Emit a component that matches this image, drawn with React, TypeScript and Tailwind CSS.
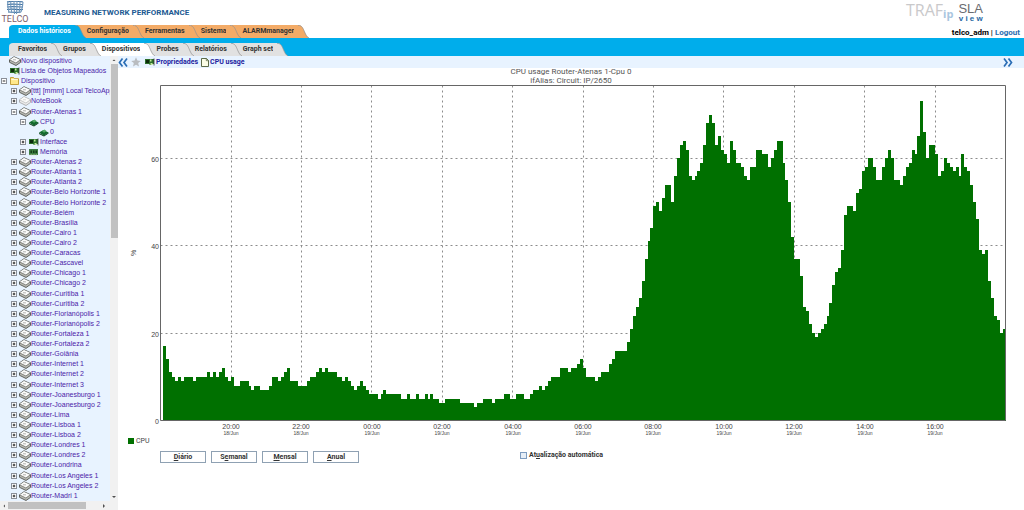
import type { ReactNode } from "react";

type IconName = "router" | "notebook" | "card" | "folder" | "chip" | "memory";

type TreeNode = {
  label: string;
  icon: IconName;
  level: number;
  toggle?: "+" | "-";
};

const routers = [
  "Atenas 2", "Atlanta 1", "Atlanta 2", "Belo Horizonte 1", "Belo Horizonte 2", "Belém", "Brasília",
  "Cairo 1", "Cairo 2", "Caracas", "Cascavel", "Chicago 1", "Chicago 2", "Curitiba 1", "Curitiba 2",
  "Florianópolis 1", "Florianópolis 2", "Fortaleza 1", "Fortaleza 2", "Goiânia", "Internet 1",
  "Internet 2", "Internet 3", "Joanesburgo 1", "Joanesburgo 2", "Lima", "Lisboa 1", "Lisboa 2",
  "Londres 1", "Londres 2", "Londrina", "Los Angeles 1", "Los Angeles 2", "Madri 1",
];

const tree: TreeNode[] = [
  { label: "Novo dispositivo", icon: "router", level: 0 },
  { label: "Lista de Objetos Mapeados", icon: "card", level: 0 },
  { label: "Dispositivo", icon: "folder", level: 0, toggle: "-" },
  { label: "[ttt] [mmm] Local TelcoApp", icon: "router", level: 1, toggle: "+" },
  { label: "NoteBook", icon: "notebook", level: 1, toggle: "+" },
  { label: "Router-Atenas 1", icon: "router", level: 1, toggle: "-" },
  { label: "CPU", icon: "chip", level: 2, toggle: "-" },
  { label: "0", icon: "chip", level: 3 },
  { label: "Interface", icon: "card", level: 2, toggle: "+" },
  { label: "Memória", icon: "memory", level: 2, toggle: "+" },
  ...routers.map((name): TreeNode => ({ label: `Router-${name}`, icon: "router", level: 1, toggle: "+" })),
];

const indent = ["pl-0", "pl-[10px]", "pl-[19px]", "pl-[29px]"];

// One sample every 5 minutes, in percent
const samples = [
  17, 14, 11, 10, 9, 10, 9, 10, 10, 10, 9, 10, 10, 10, 10, 11, 10, 11, 10, 11, 12, 10, 9, 10,
  8, 8, 9, 9, 9, 8, 7, 8, 8, 7, 7, 7, 8, 10, 10, 9, 10, 11, 12, 9, 9, 9, 8, 8,
  8, 9, 10, 10, 11, 12, 11, 12, 11, 11, 11, 10, 10, 9, 10, 9, 8, 7, 8, 9, 8, 7, 6, 6,
  6, 5, 6, 7, 6, 6, 6, 6, 6, 5, 5, 6, 5, 5, 6, 5, 5, 6, 5, 6, 5, 5, 4, 4,
  5, 5, 5, 5, 5, 4, 4, 4, 4, 4, 3, 4, 4, 5, 5, 5, 4, 5, 5, 5, 6, 6, 5, 5,
  6, 6, 6, 5, 5, 6, 7, 7, 8, 7, 8, 9, 10, 10, 10, 12, 12, 12, 11, 12, 12, 13, 14, 12,
  10, 10, 10, 9, 10, 11, 11, 11, 13, 14, 16, 16, 16, 16, 18, 21, 24, 26, 28, 32, 37, 41, 44, 49,
  50, 48, 51, 54, 54, 50, 56, 60, 63, 64, 62, 56, 55, 56, 57, 59, 63, 68, 70, 68, 63, 65, 62, 61,
  59, 64, 62, 59, 59, 58, 56, 55, 58, 58, 62, 62, 61, 61, 58, 60, 62, 64, 64, 59, 55, 50, 42, 37,
  37, 33, 26, 25, 22, 20, 19, 20, 21, 22, 24, 27, 31, 34, 35, 39, 47, 49, 49, 48, 52, 53, 57, 58,
  60, 60, 58, 55, 55, 58, 60, 62, 60, 55, 55, 54, 56, 58, 59, 62, 61, 65, 73, 66, 60, 63, 63, 61,
  56, 57, 60, 59, 58, 57, 58, 56, 61, 58, 57, 54, 50, 46, 39, 38, 39, 32, 28, 24, 23, 20, 21,
];

const hours = ["20:00", "22:00", "00:00", "02:00", "04:00", "06:00", "08:00", "10:00", "12:00", "14:00", "16:00"];

function NodeIcon({ name }: { name: IconName }) {
  if (name === "folder") {
    return (
      <svg viewBox="0 0 12 10" className="h-[10px] w-3 shrink-0">
        <path d="M1.5 8.5v-7h3l1 1.2h4v5.8z" fill="#ffe88a" stroke="#b58a1c" strokeWidth=".8" />
        <path d="M2.3 3.6h6.5" stroke="#fffbe0" />
      </svg>
    );
  }
  if (name === "card") {
    return (
      <svg viewBox="0 0 12 10" className="h-[10px] w-3 shrink-0">
        <path d="M1 2h9v5H8v1H5.500V7H1z" fill="#2b6e2a" />
        <path d="M2 3h3v3H2z" fill="#0d2b0d" />
        <path d="M6 2.500h1.500v2H6zM6.500 6h2v2H6.500z" fill="#c4e89a" />
        <path d="M10 1.500v7" stroke="#333" strokeWidth=".8" />
      </svg>
    );
  }
  if (name === "chip") {
    return (
      <svg viewBox="0 0 12 10" className="h-[10px] w-3 shrink-0">
        <path d="M1 5.500 5.500 3 10.500 5.500 6 8.800z" fill="#12692c" />
        <path d="M1 6v1l5 2.500 4.500-3v-1L6 8.500z" fill="#0a3d18" />
        <path d="M4 4 6.500 2.500 8.500 4 6 5.800z" fill="#54a868" />
      </svg>
    );
  }
  if (name === "memory") {
    return (
      <svg viewBox="0 0 12 10" className="h-[10px] w-3 shrink-0">
        <path d="M1 2h9v6H1z" fill="#3d7d42" />
        <path d="M2.500 3.500h1.500v2.500h-1.500zM5 3.500h1.500v2.500H5zM7.500 3.500H9v2.500H7.500z" fill="#143d19" />
        <path d="M1.500 7.700h8" stroke="#9cb58a" strokeDasharray="1 .6" />
      </svg>
    );
  }
  const side = name === "router" ? "#b9bab4" : "#ececec";
  const line = name === "router" ? "#44453f" : "#a2a2a2";
  return (
    <svg viewBox="0 0 12 10" className="h-[10px] w-3 shrink-0">
      <path d="M.500 3.800 5 .7l6.500 3v2.700L7 9.500.500 6.300z" fill={side} stroke={line} strokeWidth=".8" />
      <path d="M1 3.800 5 1.100l6 2.700-4.200 2.900z" fill="#fbfbfa" />
      <path d="M4 3.700l3 .2" stroke={line} strokeWidth=".4" />
      <path d="M.8 4l6.100 3 4.400-3.100" fill="none" stroke={line} strokeWidth=".5" />
    </svg>
  );
}

function Toggle({ sign }: { sign: "+" | "-" }) {
  return (
    <button aria-label={sign === "+" ? "Expandir" : "Recolher"} className="h-[6px] w-[6px] shrink-0">
      <svg viewBox="0 0 6 6" className="block h-[6px] w-[6px]">
        <rect x=".5" y=".5" width="5" height="5" fill="#fff" stroke="#8a8f98" />
        <path d={sign === "+" ? "M1.700 3h2.600M3 1.700v2.600" : "M1.700 3h2.600"} stroke="#111" strokeWidth=".9" />
      </svg>
    </button>
  );
}

function TreeRow({ node }: { node: TreeNode }) {
  return (
    <li className={`flex min-h-[10px] flex-1 items-center ${indent[node.level]}`}>
      <span className="flex w-[9px] shrink-0 items-center pl-px">{node.toggle && <Toggle sign={node.toggle} />}</span>
      <NodeIcon name={node.icon} />
      <a href="#" className="whitespace-nowrap leading-[10px] text-[#4a22a8]">{node.label}</a>
    </li>
  );
}

function Arrow({ d }: { d: string }) {
  return (
    <svg viewBox="0 0 8 8" className="h-2 w-2 shrink-0">
      <path d={d} fill="#505050" />
    </svg>
  );
}

function Sidebar() {
  return (
    <aside className="flex w-[118px] shrink-0 flex-col bg-[#e8f3ff]">
      <div className="flex flex-1">
        <ul className="flex min-w-0 flex-1 flex-col font-['Liberation_Sans',sans-serif]">
          {tree.map((node) => (
            <TreeRow key={node.label} node={node} />
          ))}
        </ul>
        <div className="flex w-2 shrink-0 flex-col items-center bg-[#f1f1f1]">
          <Arrow d="M2.500 5 4 3.500 5.500 5z" />
          <div className="h-[39%] w-[7px] bg-[#c1c1c1]" />
          <div className="flex flex-1 items-end">
            <Arrow d="M2 3h4L4 5z" />
          </div>
        </div>
      </div>
      <div className="flex h-[9px] items-center bg-[#f1f1f1] pr-[10px]">
        <Arrow d="M5 2.500 3.500 4 5 5.500z" />
        <div className="h-[7px] w-[78px] bg-[#c1c1c1]" />
        <div className="flex flex-1 justify-end">
          <Arrow d="M3 2v4l2-2z" />
        </div>
      </div>
    </aside>
  );
}

type TabProps = { label: string; color: string; next: string; text: string };

function Tab({ label, color, next, text }: TabProps) {
  return (
    <a href="#" className={`flex h-[13px] ${text}`}>
      <span className="whitespace-nowrap leading-[13px]" style={{ backgroundColor: color }}>{label}</span>
      <svg viewBox="0 0 16 13" className="h-[13px] w-4 shrink-0">
        <path d="M6 0h10v13H6z" fill={next} />
        <path d="M0 0h4c4 0 5 3 6.500 6.500S13 12 15 13H0z" fill={color} />
        <path d="M4 .3c4 0 5 3 6.500 6.500S13 12 15 13" fill="none" stroke="#8f8f8f" strokeWidth=".7" />
      </svg>
    </a>
  );
}

function TabStart({ color }: { color: string }) {
  return (
    <svg viewBox="0 0 9 13" className="ml-[9px] h-[13px] w-[9px] shrink-0">
      <path d="M0 13V4c0-3 1.500-4 4-4h5v13z" fill={color} />
    </svg>
  );
}

const mainTabs: TabProps[] = [
  { label: "Dados históricos", color: "#00adeb", next: "#f3ab67", text: "text-white" },
  { label: "Configuração", color: "#f3ab67", next: "#f3ab67", text: "text-[#333]" },
  { label: "Ferramentas", color: "#f3ab67", next: "#f3ab67", text: "text-[#333]" },
  { label: "Sistema", color: "#f3ab67", next: "#f3ab67", text: "text-[#333]" },
  { label: "ALARMmanager", color: "#f3ab67", next: "none", text: "text-[#333]" },
];

const subTabs: TabProps[] = [
  { label: "Favoritos", color: "#e1e1e1", next: "#e1e1e1", text: "text-[#333]" },
  { label: "Grupos", color: "#e1e1e1", next: "#fff", text: "text-[#333]" },
  { label: "Dispositivos", color: "#fff", next: "#e1e1e1", text: "text-[#333]" },
  { label: "Probes", color: "#e1e1e1", next: "#e1e1e1", text: "text-[#333]" },
  { label: "Relatórios", color: "#e1e1e1", next: "#e1e1e1", text: "text-[#333]" },
  { label: "Graph set", color: "#e1e1e1", next: "none", text: "text-[#333]" },
];

function TelcoLogo() {
  return (
    <div className="flex w-[30px] flex-col items-center pt-px">
      <svg viewBox="0 0 18 13" className="h-[13px] w-[18px]">
        <path d="M1 1c5-1 11-1 16 0M1 3.500c5-1 10 0 16 0M1 6c6-1 10 0 16 0M1 8.500c6-1 10 .5 16 0M2 11c5 0 8 1 13 0" fill="none" stroke="#41719f" strokeWidth="1.200" />
        <path d="M2 0c-1 4 0 7 1 11M5 0c-1 5 0 8 1 12M8 0c0 5 0 8 .5 13M11 0c0 5 0 8-.5 13M14 0c0 5 0 8-1 12M17 1c0 4-1 7-2 10" fill="none" stroke="#6f97bd" strokeWidth="1.100" />
      </svg>
      <span className="text-[9px] leading-[11px] text-[#80606a]">TELCO</span>
    </div>
  );
}

function ProductLogo() {
  return (
    <div className="flex pt-[3px] pr-[41px] font-['Open_Sans']">
      <span className="text-[16px] leading-[14px] text-[#c9c9cb]">TRAF</span>
      <span className="pt-[5px] text-[11px] leading-[12px] font-bold text-[#a9c6e0]">ip</span>
      <span className="flex flex-col items-center pl-[5px] font-['Liberation_Sans']">
        <span className="text-[13px] leading-[12px] text-[#6a6c70]">SLA</span>
        <span className="text-[8px] leading-[8px] font-bold text-[#2968a3]">v i e w</span>
      </span>
    </div>
  );
}

function Header() {
  return (
    <header>
      <div className="flex h-[25px] items-start justify-between">
        <div className="flex">
          <TelcoLogo />
          <h1 className="pt-2 pl-[14px] text-[8px] leading-[10px] font-bold text-[#225a92]">
            MEASURING NETWORK PERFORMANCE
          </h1>
        </div>
        <ProductLogo />
      </div>
      <div className="flex items-end justify-between font-bold">
        <nav className="flex">
          <TabStart color="#00adeb" />
          {mainTabs.map((tab) => (
            <Tab key={tab.label} {...tab} />
          ))}
        </nav>
        <p className="pr-1 text-[8px] leading-[10px] text-black">
          telco_adm | <a href="#" className="text-[#2a6db0]">Logout</a>
        </p>
      </div>
      <nav className="flex bg-[#00adeb] pt-[5px] font-bold">
        <TabStart color="#e1e1e1" />
        {subTabs.map((tab) => (
          <Tab key={tab.label} {...tab} />
        ))}
      </nav>
    </header>
  );
}

function Toolbar() {
  return (
    <div className="flex h-3 items-center bg-[#e8f3ff] font-bold text-[#2222a0]">
      <button aria-label="Recolher menu">
        <svg viewBox="0 0 10 9" className="block h-[9px] w-[10px]">
          <path d="M4.500.500 1.500 4.500l3 4M9 .500 6 4.500l3 4" fill="none" stroke="#2a6db5" strokeWidth="1.700" />
        </svg>
      </button>
      <button aria-label="Favorito" className="pl-[3px]">
        <svg viewBox="0 0 10 10" className="block h-[10px] w-[10px]">
          <path d="M5 .3 6.400 3.600l3.400.3-2.600 2.200.8 3.500L5 7.700 2 9.600l.8-3.500L.2 3.900l3.400-.3z" fill="#b9bcc0" />
        </svg>
      </button>
      <a href="#" className="flex items-center pl-[3px]">
        <NodeIcon name="card" />
        Propriedades
      </a>
      <a href="#" className="flex items-center gap-px pl-[3px]">
        <svg viewBox="0 0 8 9" className="h-[9px] w-2">
          <path d="M.500.500h5l2 2v6h-7z" fill="#fbfde6" stroke="#4c5a35" strokeWidth=".9" />
          <path d="M5.300.500v2.200h2.200" fill="none" stroke="#4c5a35" strokeWidth=".7" />
        </svg>
        CPU usage
      </a>
      <button aria-label="Avançar" className="ml-auto pr-[11px]">
        <svg viewBox="0 0 10 9" className="block h-[9px] w-[10px]">
          <path d="M1 .500l3 4-3 4M5.500.500l3 4-3 4" fill="none" stroke="#2a6db5" strokeWidth="1.700" />
        </svg>
      </button>
    </div>
  );
}

// Plot area inside the drawing
const left = 42.5;
const right = 887.5;
const top = 17.5;
const base = 352.5;
const unit = 4.37;
const firstBar = 45.4;
const barWidth = 2.934;

function UsageChart() {
  const outline = samples
    .map((value, i) => `V${Math.round(base - value * unit)}H${(firstBar + (i + 1) * barWidth).toFixed(1)}`)
    .join("");

  return (
    <svg viewBox="0 0 906 368" className="block w-full" role="img" aria-label="CPU usage">
      <g fill="#555" textAnchor="middle" className="text-[8px]">
        <text x="453" y="6">CPU usage Router-Atenas 1-Cpu 0</text>
        <text x="453" y="15">ifAlias: Circuit: IP/2650</text>
      </g>
      <g stroke="#8c8c8c" strokeDasharray="2 3">
        {[20, 40, 60].map((tick) => (
          <path key={tick} d={`M${left} ${Math.floor(base - tick * unit) + 0.5}H${right}`} />
        ))}
        {hours.map((hour, i) => (
          <path key={hour} d={`M${Math.round(112.5 + i * 70.4) + 0.5} ${top}V${base}`} />
        ))}
      </g>
      <path d={`M${firstBar} ${base}${outline}V${base}z`} fill="#007000" shapeRendering="crispEdges" />
      <path d={`M${left} ${top}H${right}V${base}H${left}z`} fill="none" stroke="#666" />
      <g fill="#444" textAnchor="end" className="font-['Liberation_Sans'] text-[7px]">
        {[0, 20, 40, 60].map((tick) => (
          <text key={tick} x="41" y={Math.floor(base - tick * unit) + 4}>{tick}</text>
        ))}
      </g>
      <text transform="translate(18 188) rotate(-90)" fill="#444" className="font-['Liberation_Sans'] text-[7px]">%</text>
      <g fill="#444" textAnchor="middle" className="font-['Liberation_Sans']">
        {hours.map((hour, i) => (
          <g key={hour}>
            <text x={Math.round(113 + i * 70.4)} y="361" className="text-[7px]">{hour}</text>
            <text x={Math.round(113 + i * 70.4)} y="367" className="text-[5px]">{i < 2 ? "18/Jun" : "19/Jun"}</text>
          </g>
        ))}
      </g>
    </svg>
  );
}

function PeriodButton({ children }: { children: ReactNode }) {
  return (
    <button className="h-3 w-[46px] border border-[#8fa1b3] bg-white font-bold leading-[10px] text-[#333]">
      {children}
    </button>
  );
}

export default function App() {
  return (
    <div className="flex min-h-screen flex-col bg-white font-['Roboto',sans-serif] text-[7px]">
      <Header />
      <div className="flex flex-1">
        <Sidebar />
        <main className="min-w-0 flex-1">
          <Toolbar />
          <UsageChart />
          <div className="flex items-center gap-[2px] pt-px pl-[10px] leading-[8px] text-[#444]">
            <span className="h-[6px] w-[6px] bg-[#007000]" />
            CPU
          </div>
          <div className="flex items-start pt-[6px] pl-[42px]">
            <div className="flex w-[360px] gap-[5px]">
              <PeriodButton><u>D</u>iário</PeriodButton>
              <PeriodButton>S<u>e</u>manal</PeriodButton>
              <PeriodButton><u>M</u>ensal</PeriodButton>
              <PeriodButton><u>A</u>nual</PeriodButton>
            </div>
            <label className="flex items-center gap-[2px] font-bold leading-[8px] text-[#333]">
              <input type="checkbox" className="h-[7px] w-[7px] appearance-none border border-[#7d9cc0] bg-[#e6eef7]" />
              <span>At<u>u</u>alização automática</span>
            </label>
          </div>
        </main>
      </div>
    </div>
  );
}
